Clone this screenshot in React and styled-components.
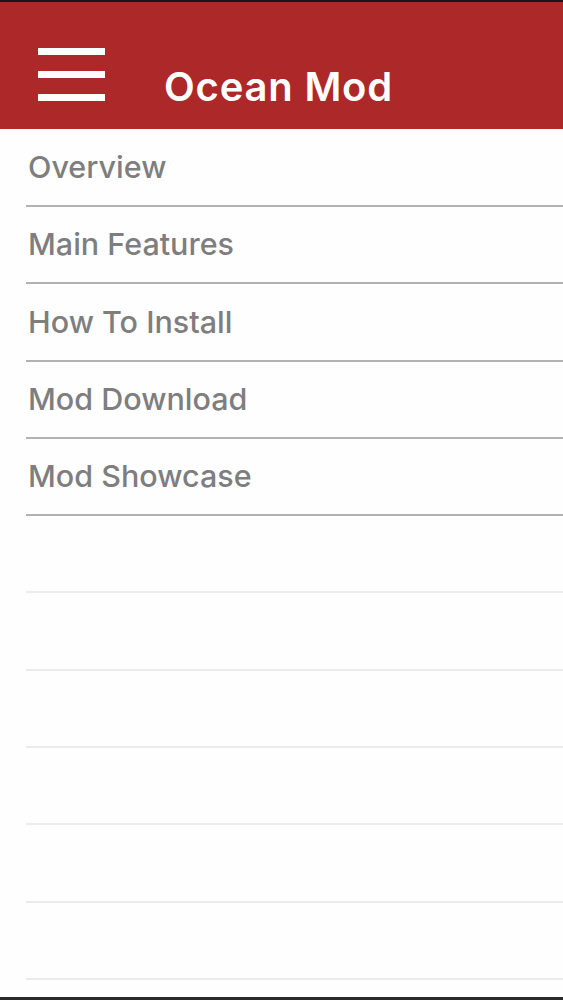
import React from 'react';
import styled, { createGlobalStyle } from 'styled-components';

const GlobalStyle = createGlobalStyle`
    html, body {
        margin: 0;
        padding: 0;
        background: #ffffff;
    }
    body {
        font-family: Inter, "Liberation Sans", Arial, sans-serif;
    }
`;

const Screen = styled.div`
    height: 100vh;
    box-sizing: border-box;
    display: flex;
    flex-direction: column;
    border-top: 2px solid #1c1414;
    border-bottom: 3px solid #2a2a2a;
    overflow: hidden;
    background: #fefefe;
`;

const Header = styled.header`
    flex: 0 0 127px;
    display: flex;
    align-items: flex-start;
    padding-left: 38px;
    background: #ad2828;
`;

const MenuButton = styled.button`
    margin-top: 46px;
    padding: 0;
    border: 0;
    background: none;
    display: flex;
    flex-direction: column;
    gap: 16px;
    cursor: pointer;
`;

const MenuBar = styled.span`
    display: block;
    width: 67px;
    height: 7px;
    background: #ffffff;
`;

const Title = styled.h1`
    margin: 65px 0 0 59px;
    font-size: 40px;
    line-height: 1;
    font-weight: 600;
    letter-spacing: 0.8px;
    color: #ffffff;
`;

const List = styled.ul`
    list-style: none;
    margin: 0;
    padding: 0;
    flex: 1;
`;

const Row = styled.li`
    height: ${p => (p.first ? 78 : 77.3)}px;
    box-sizing: border-box;
    margin-left: 26px;
    display: flex;
    align-items: center;
    padding-left: 2px;
    border-bottom: 2px solid ${p => (p.filled ? '#b2b2b2' : '#ebebeb')};
    font-size: 30.5px;
    line-height: 1;
    font-weight: 500;
    color: #7e7e7e;
`;

const items = ['Overview', 'Main Features', 'How To Install', 'Mod Download', 'Mod Showcase'];

const App = () => {
    const rows = [...items, ...Array(6).fill('')];
    return (
        <>
            <GlobalStyle />
            <Screen>
                <Header>
                    <MenuButton aria-label="Menu">
                        <MenuBar />
                        <MenuBar />
                        <MenuBar />
                    </MenuButton>
                    <Title>Ocean Mod</Title>
                </Header>
                <List>
                    {rows.map((label, i) => (
                        <Row key={i} first={i === 0} filled={label !== ''}>
                            {label}
                        </Row>
                    ))}
                </List>
            </Screen>
        </>
    );
};

export default App;
